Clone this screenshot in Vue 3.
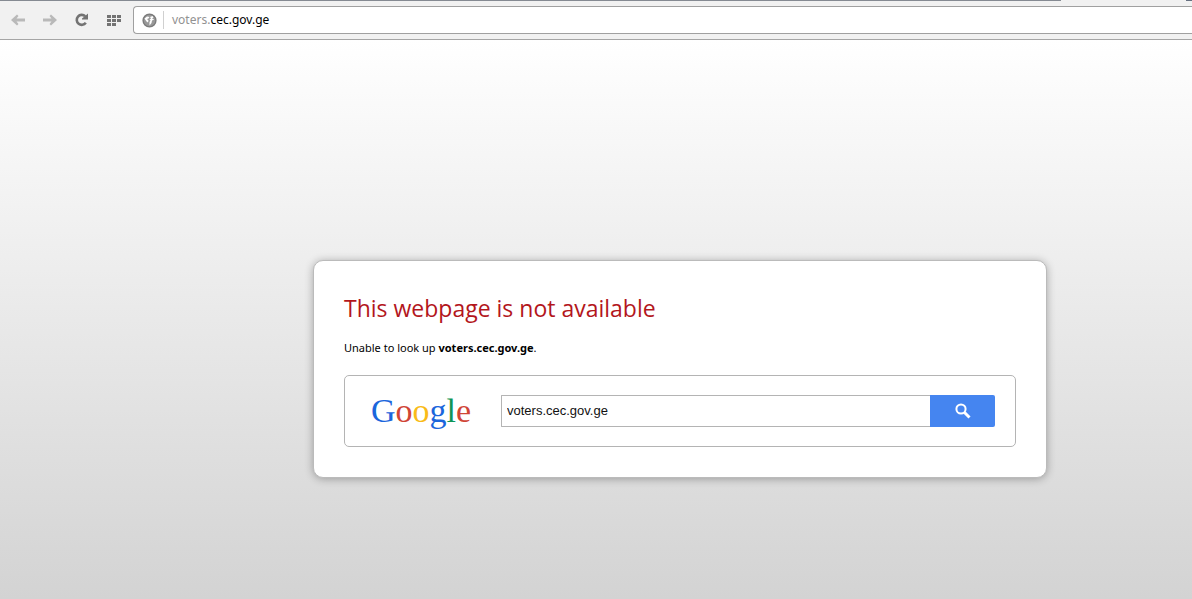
<script setup>
import { ref } from 'vue'

const host = 'voters.cec.gov.ge'
const address = ref(host)
const query = ref(host)

const logo = [
  { char: 'G', tone: 'blue' },
  { char: 'o', tone: 'red' },
  { char: 'o', tone: 'yellow' },
  { char: 'g', tone: 'blue' },
  { char: 'l', tone: 'green' },
  { char: 'e', tone: 'red' },
]
const dots = [
  [0, 0], [5, 0], [10, 0],
  [0, 4], [5, 4], [10, 4],
  [0, 8], [5, 8],
]
</script>

<template>
  <div class="browser">
    <div class="tab-edge"><span class="edge-main"></span><span class="edge-gap"></span><span class="edge-end"></span></div>
    <header class="toolbar">
      <nav class="tools" aria-label="Browser">
        <button type="button" class="tool faded" aria-label="Back">
          <svg width="14" height="12" viewBox="0 0 14 12"><path d="M0 6 6 0.5 7.5 2 5.5 4.5H14v3H5.5L7.5 10 6 11.5Z" /></svg>
        </button>
        <button type="button" class="tool faded" aria-label="Forward">
          <svg width="14" height="12" viewBox="0 0 14 12"><path d="M14 6 8 0.5 6.5 2 8.5 4.5H0v3h8.5L6.5 10 8 11.5Z" /></svg>
        </button>
        <button type="button" class="tool" aria-label="Reload">
          <svg width="14" height="14" viewBox="0 0 14 14">
            <path d="M10.200 3.200A5 5 0 1 0 10.800 9.800" fill="none" stroke="#737373" stroke-width="2.6" />
            <path d="M13 0.500V6.500H7V5.500L9.500 3.500Z" />
          </svg>
        </button>
        <button type="button" class="tool" aria-label="Speed dial">
          <svg width="14" height="11" viewBox="0 0 14 11">
            <rect v-for="(d, i) in dots" :key="i" :x="d[0]" :y="d[1]" width="4" height="3" />
          </svg>
        </button>
      </nav>
      <div class="address">
        <svg class="globe" width="15" height="15" viewBox="0 0 15 15">
          <circle cx="7.5" cy="7.5" r="6.4" fill="#989898" stroke="#7a7a7a" stroke-width="1.4" />
          <path d="M2.500 5.500 5 3.500 7.500 4 6.500 5.500 5 6 6.500 7.500 6 9.500 4.500 8.500ZM8 4 10.500 3 11.500 4.500 10 5.500 12.200 6.500 10 7.500 9.500 10 7.500 12.500 7.500 9 8.500 7.500 7.500 6.500 9 5.500Z" fill="#fff" />
        </svg>
        <div class="address-text">
          <span class="url" aria-hidden="true"><span class="sub">voters.</span>cec.gov.ge</span>
          <input v-model="address" class="url-input" type="text" aria-label="Address" spellcheck="false" />
        </div>
      </div>
    </header>

    <main class="page">
      <section class="card">
        <h1>This webpage is not available</h1>
        <p>Unable to look up <strong>{{ host }}</strong>.</p>
        <form class="search" @submit.prevent>
          <div class="logo" role="img" aria-label="Google">
            <span v-for="(l, i) in logo" :key="i" :class="l.tone">{{ l.char }}</span>
          </div>
          <input v-model="query" class="query" type="text" aria-label="Search" spellcheck="false" />
          <button type="submit" class="go" aria-label="Search">
            <svg width="16" height="16" viewBox="0 0 16 16" fill="none" stroke="#fff">
              <circle cx="6" cy="6" r="4.6" stroke-width="2" />
              <path d="M9.5 9.5 14.5 14.5" stroke-width="3" />
            </svg>
          </button>
        </form>
      </section>
    </main>
  </div>
</template>

<style>
html,
body,
#app {
  height: 100%;
}

body {
  margin: 0;
}
</style>

<style scoped>
.browser {
  box-sizing: border-box;
  min-height: 100%;
  display: flex;
  flex-direction: column;
  font-family: "Noto Sans", "Open Sans", sans-serif;
  color: #000;
  overflow: hidden;
}

.tab-edge {
  display: flex;
  height: 1px;
  background: #f1f1f1;
}

.edge-main {
  flex: 1;
  background: #858a92;
}

.edge-gap {
  width: 125px;
}

.edge-end {
  width: 6px;
  background: #667080;
}

.toolbar {
  display: flex;
  align-items: center;
  height: 38px;
  background: #f1f1f1;
  border-bottom: 1px solid #a5a5a5;
}

.tools {
  display: flex;
  padding: 0 3px 0 2px;
}

.tool {
  display: flex;
  align-items: center;
  justify-content: center;
  width: 32px;
  height: 28px;
  padding: 0;
  border: 0;
  background: none;
  fill: #737373;
}

.faded {
  fill: #b9b9b9;
}

.address {
  flex: 1;
  box-sizing: border-box;
  display: flex;
  align-items: center;
  height: 28px;
  padding-left: 8px;
  border: 1px solid #a0a0a0;
  border-right: 0;
  border-radius: 4px 0 0 4px;
  background: #fff;
}

.address-text {
  flex: 1;
  position: relative;
  display: flex;
  align-items: center;
  height: 18px;
  margin-left: 6px;
  padding-left: 8px;
  border-left: 1px solid #d0d0d0;
  font-size: 12px;
  line-height: 18px;
}

.sub {
  color: #929292;
}

.url-input {
  position: absolute;
  inset: 0;
  padding: 0 8px;
  border: 0;
  outline: 0;
  background: transparent;
  color: transparent;
  font: inherit;
}

.page {
  flex: 1;
  display: grid;
  grid-template-columns: minmax(0, 734px);
  align-content: start;
  padding: 220px 145px 120px 313px;
  background: linear-gradient(#fff, #d3d3d3);
}

.card {
  box-sizing: border-box;
  padding: 30px;
  border: 1px solid #bbb;
  border-radius: 10px;
  background: #fff;
  box-shadow: 0 1px 8px rgba(0, 0, 0, 0.3);
}

h1 {
  margin: 0;
  color: #b3161c;
  font-family: "Open Sans", "Noto Sans", sans-serif;
  font-size: 23px;
  font-weight: 400;
  line-height: 34px;
}

p {
  margin: 14px 0 18px;
  font-size: 11px;
  line-height: 18px;
}

.search {
  display: flex;
  align-items: center;
  box-sizing: border-box;
  height: 72px;
  padding: 0 20px 0 26px;
  border: 1px solid #b4b4b4;
  border-radius: 5px;
}

.logo {
  display: flex;
  width: 130px;
  font-family: "Liberation Serif", serif;
  font-size: 34px;
  line-height: 40px;
}

.blue {
  color: #1b66dc;
}

.red {
  color: #d04536;
}

.yellow {
  color: #f9bb18;
}

.green {
  color: #0f9555;
}

.query {
  flex: 1;
  min-width: 0;
  box-sizing: border-box;
  height: 32px;
  padding: 0 5px 2px;
  border: 1px solid #b4b4b4;
  border-right: 0;
  border-radius: 1px 0 0 1px;
  outline: 0;
  background: #fff;
  color: #111;
  font-family: "Liberation Sans", Arial, sans-serif;
  font-size: 13px;
}

.go {
  display: flex;
  align-items: center;
  justify-content: center;
  width: 65px;
  height: 32px;
  padding: 0;
  border: 0;
  border-radius: 0 2px 2px 0;
  background: #4585f0;
}
</style>
